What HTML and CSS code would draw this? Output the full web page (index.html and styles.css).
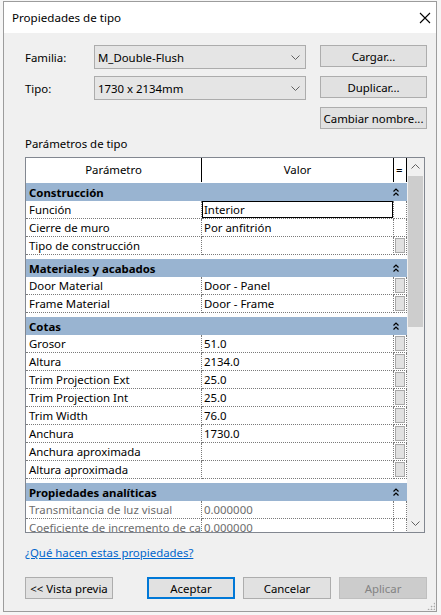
FILE: index.html
```html
<!DOCTYPE html>
<html lang="es">
    <head>
        <meta charset="UTF-8">
        <title>Propiedades de tipo</title>
<link rel="stylesheet" href="styles.css">
    </head>
    <body>
        <div class="dialog">
            <div class="titlebar">
                <span class="title">Propiedades de tipo</span>
                <svg class="close" width="12" height="12" viewBox="0 0 12 12"><path d="M1 1L11 11M11 1L1 11" stroke="#000" stroke-width="1.1" fill="none"/></svg>
            </div>

            <div class="content">
                <div class="selectors">
                    <label class="lbl">Familia:</label>
                    <div class="combo"><span>M_Double-Flush</span><svg width="9" height="5" viewBox="0 0 9 5"><path d="M0.5 0.5L4.5 4.5L8.5 0.5" stroke="#606060" fill="none"/></svg></div>
                    <button class="btn">Cargar...</button>

                    <label class="lbl">Tipo:</label>
                    <div class="combo"><span>1730 x 2134mm</span><svg width="9" height="5" viewBox="0 0 9 5"><path d="M0.5 0.5L4.5 4.5L8.5 0.5" stroke="#606060" fill="none"/></svg></div>
                    <button class="btn">Duplicar...</button>

                    <span></span>
                    <span></span>
                    <button class="btn">Cambiar nombre...</button>
                </div>

                <div class="section-label">Parámetros de tipo</div>

                <div class="grid-box">
                    <div class="rows">
                        <div class="head">
                            <div class="c1">Parámetro</div>
                            <div class="c2">Valor</div>
                            <div class="c3">=</div>
                        </div>

                        <div class="group first">
                            <span>Construcción</span>
                            <svg class="fold" width="6" height="8" viewBox="0 0 6 8"><path d="M0.5 3.5L3 1L5.5 3.5M0.5 7.5L3 5L5.5 7.5" stroke="#000" stroke-width="1.2" fill="none"/></svg>
                        </div>
                        <div class="row"><div class="c1">Función</div><div class="c2"><span class="edit">Interior</span></div><div class="c3"></div></div>
                        <div class="row"><div class="c1">Cierre de muro</div><div class="c2">Por anfitrión</div><div class="c3"></div></div>
                        <div class="row"><div class="c1">Tipo de construcción</div><div class="c2"></div><div class="c3"><i class="mini"></i></div></div>

                        <div class="group">
                            <span>Materiales y acabados</span>
                            <svg class="fold" width="6" height="8" viewBox="0 0 6 8"><path d="M0.5 3.5L3 1L5.5 3.5M0.5 7.5L3 5L5.5 7.5" stroke="#000" stroke-width="1.2" fill="none"/></svg>
                        </div>
                        <div class="row"><div class="c1">Door Material</div><div class="c2">Door - Panel</div><div class="c3"><i class="mini"></i></div></div>
                        <div class="row"><div class="c1">Frame Material</div><div class="c2">Door - Frame</div><div class="c3"><i class="mini"></i></div></div>

                        <div class="group">
                            <span>Cotas</span>
                            <svg class="fold" width="6" height="8" viewBox="0 0 6 8"><path d="M0.5 3.5L3 1L5.5 3.5M0.5 7.5L3 5L5.5 7.5" stroke="#000" stroke-width="1.2" fill="none"/></svg>
                        </div>
                        <div class="row"><div class="c1">Grosor</div><div class="c2">51.0</div><div class="c3"><i class="mini"></i></div></div>
                        <div class="row"><div class="c1">Altura</div><div class="c2">2134.0</div><div class="c3"><i class="mini"></i></div></div>
                        <div class="row"><div class="c1">Trim Projection Ext</div><div class="c2">25.0</div><div class="c3"><i class="mini"></i></div></div>
                        <div class="row"><div class="c1">Trim Projection Int</div><div class="c2">25.0</div><div class="c3"><i class="mini"></i></div></div>
                        <div class="row"><div class="c1">Trim Width</div><div class="c2">76.0</div><div class="c3"><i class="mini"></i></div></div>
                        <div class="row"><div class="c1">Anchura</div><div class="c2">1730.0</div><div class="c3"><i class="mini"></i></div></div>
                        <div class="row"><div class="c1">Anchura aproximada</div><div class="c2"></div><div class="c3"><i class="mini"></i></div></div>
                        <div class="row"><div class="c1">Altura aproximada</div><div class="c2"></div><div class="c3"><i class="mini"></i></div></div>

                        <div class="group">
                            <span>Propiedades analíticas</span>
                            <svg class="fold" width="6" height="8" viewBox="0 0 6 8"><path d="M0.5 3.5L3 1L5.5 3.5M0.5 7.5L3 5L5.5 7.5" stroke="#000" stroke-width="1.2" fill="none"/></svg>
                        </div>
                        <div class="row disabled"><div class="c1">Transmitancia de luz visual</div><div class="c2">0.000000</div><div class="c3"></div></div>
                        <div class="row disabled"><div class="c1">Coeficiente de incremento de calor solar</div><div class="c2">0.000000</div><div class="c3"></div></div>
                    </div>
                    <div class="scrollbar">
                        <div class="arrow"><svg width="9" height="5" viewBox="0 0 9 5"><path d="M0.5 4.5L4.5 0.5L8.5 4.5" stroke="#606060" fill="none"/></svg></div>
                        <div class="track"><div class="thumb"></div></div>
                        <div class="arrow"><svg width="9" height="5" viewBox="0 0 9 5"><path d="M0.5 0.5L4.5 4.5L8.5 0.5" stroke="#606060" fill="none"/></svg></div>
                    </div>
                </div>

                <a class="help" href="#">¿Qué hacen estas propiedades?</a>

                <div class="actions">
                    <button class="btn">&lt;&lt; Vista previa</button>
                    <div class="spacer"></div>
                    <button class="btn default">Aceptar</button>
                    <button class="btn">Cancelar</button>
                    <button class="btn" disabled>Aplicar</button>
                </div>
            </div>
            <div class="grip"></div>
        </div>
    </body>
</html>
```

FILE: styles.css
```css
html,body {
    margin: 0;
    background-color: #f6f6f6;
    font-family: "Noto Sans", sans-serif;
    font-size: 11.4px;
    color: #000;
}

.dialog {
    position: relative;
    box-sizing: border-box;
    width: 434px;
    height: 611px;
    margin: 1px 0 0 3px;
    border: 1px solid #9c9c9c;
    background-color: #f0f0f0;
}

.titlebar {
    height: 31px;
    background-color: #fff;
    display: flex;
    align-items: center;
    justify-content: space-between;
    padding: 0 5px 0 8px;
}
.title {
    font-size: 11.6px;
}

.content {
    padding: 12px 9px 0 21px;
}

.selectors {
    display: grid;
    grid-template-columns: 55px 212px 1fr;
    grid-auto-rows: 24px;
    column-gap: 14px;
    row-gap: 7px;
}
.lbl {
    align-self: center;
}
.combo {
    box-sizing: border-box;
    display: flex;
    align-items: center;
    justify-content: space-between;
    padding: 0 5px 0 3px;
    background-color: #e5e5e5;
    border: 1px solid #acacac;
}

.btn {
    box-sizing: border-box;
    height: 22px;
    padding: 0;
    font-family: inherit;
    font-size: 11.4px;
    color: #000;
    background-color: #e1e1e1;
    border: 1px solid #adadad;
    white-space: nowrap;
}
.btn.default {
    border: 2px solid #0078d7;
}
.btn:disabled {
    color: #838383;
    background-color: #cccccc;
    border-color: #bfbfbf;
}

.section-label {
    line-height: 16px;
    margin: 5px 0 5px;
}

.grid-box {
    box-sizing: border-box;
    display: flex;
    width: 400px;
    height: 376px;
    border: 1px solid #828790;
    background-color: #fff;
}
.rows {
    width: 381px;
    overflow: hidden;
}

.head,
.row {
    display: grid;
    grid-template-columns: 176px 192px 13px;
}
.head {
    height: 24px;
    line-height: 23px;
    text-align: center;
    background-color: #fff;
}
.head .c1 {
    border-right: 1px solid #000;
}
.head .c2 {
    border-right: 1px solid #000;
}
.head .c3 {
    border-right: 1px solid #000;
    text-align: left;
    padding-left: 2px;
}

.group {
    display: flex;
    align-items: center;
    justify-content: space-between;
    height: 18px;
    margin-top: 4px;
    padding: 0 8px 0 3px;
    background-color: #99b4d1;
    font-weight: bold;
}
.group.first {
    margin-top: 1px;
}

.row {
    height: 18px;
    line-height: 17px;
    white-space: nowrap;
}
.row > div {
    box-sizing: border-box;
    min-width: 0;
    overflow: hidden;
    border-bottom: 1px dotted #7a7a7a;
}
.row .c1 {
    padding-left: 3px;
    border-right: 1px dotted #7a7a7a;
}
.row .c2 {
    padding-left: 2px;
    border-right: 1px dotted #7a7a7a;
}
.row .c3 {
    border-right: 1px dotted #7a7a7a;
    padding: 1px 0 0 1px;
}
.row.disabled {
    color: #6d6d6d;
}
.edit {
    display: block;
    box-sizing: border-box;
    height: 18px;
    margin: 0 -1px 0 -2px;
    padding-left: 1px;
    border: 1px solid #000;
    border-width: 1px 2px 2px 1px;
    line-height: 15px;
}
.mini {
    display: block;
    box-sizing: border-box;
    width: 10px;
    height: 15px;
    background-color: #e1e1e1;
    border: 1px solid #a8a8a8;
}

.scrollbar {
    display: flex;
    flex-direction: column;
    width: 17px;
    background-color: #f0f0f0;
}
.scrollbar .arrow {
    height: 17px;
    display: flex;
    align-items: center;
    justify-content: center;
}
.scrollbar .track {
    flex: 1;
}
.scrollbar .thumb {
    height: 151px;
    margin: 1px 1px 0;
    background-color: #cdcdcd;
}

.help {
    display: block;
    width: max-content;
    margin-top: 12px;
    line-height: 16px;
    color: #0066cc;
}

.actions {
    display: flex;
    gap: 8px;
    margin-top: 16px;
}
.actions .btn {
    width: 88px;
}
.actions .spacer {
    flex: 1;
}

.grip {
    position: absolute;
    right: 1px;
    bottom: 1px;
    width: 8px;
    height: 8px;
    background-image: radial-gradient(circle, #a9a9a9 0.8px, transparent 1.1px);
    background-size: 3px 3px;
    clip-path: polygon(100% 0, 100% 100%, 0 100%);
}
```
